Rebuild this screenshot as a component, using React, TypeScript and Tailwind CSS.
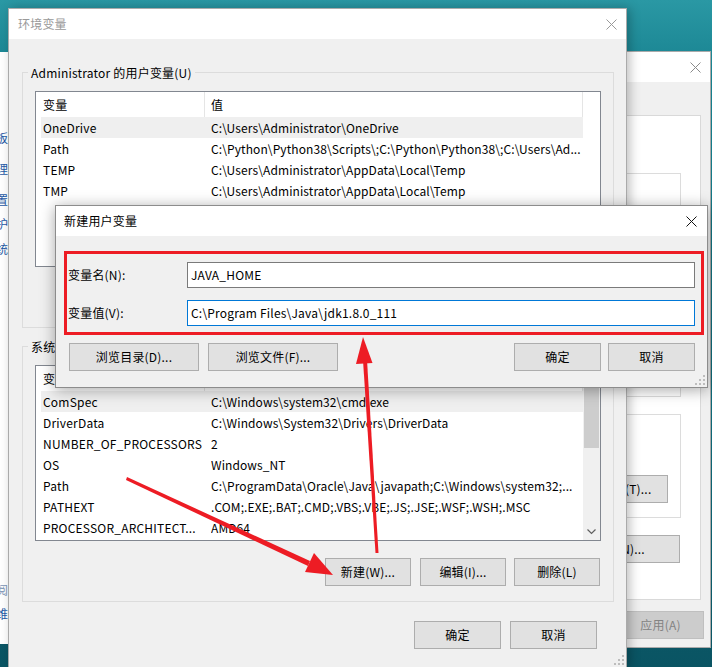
import type { ReactNode } from "react";

const userVars = [
  ["OneDrive", "C:\\Users\\Administrator\\OneDrive"],
  ["Path", "C:\\Python\\Python38\\Scripts\\;C:\\Python\\Python38\\;C:\\Users\\Ad..."],
  ["TEMP", "C:\\Users\\Administrator\\AppData\\Local\\Temp"],
  ["TMP", "C:\\Users\\Administrator\\AppData\\Local\\Temp"],
];

const sysVars = [
  ["ComSpec", "C:\\Windows\\system32\\cmd.exe"],
  ["DriverData", "C:\\Windows\\System32\\Drivers\\DriverData"],
  ["NUMBER_OF_PROCESSORS", "2"],
  ["OS", "Windows_NT"],
  ["Path", "C:\\ProgramData\\Oracle\\Java\\javapath;C:\\Windows\\system32;..."],
  ["PATHEXT", ".COM;.EXE;.BAT;.CMD;.VBS;.VBE;.JS;.JSE;.WSF;.WSH;.MSC"],
  ["PROCESSOR_ARCHITECT...", "AMD64"],
];

const CloseX = ({ color }: { color: string }) => (
  <svg width="11" height="11" viewBox="0 0 11 11">
    <path d="M0.5 0.5 L10.5 10.5 M10.5 0.5 L0.5 10.5" stroke={color} strokeWidth="1" />
  </svg>
);

const Grip = () => (
  <svg width="10" height="10" viewBox="0 0 10 10" className="absolute right-[2px] bottom-[2px]">
    {[[8, 0], [8, 4], [4, 4], [8, 8], [4, 8], [0, 8]].map(([x, y]) => (
      <rect key={`${x}-${y}`} x={x} y={y} width="2" height="2" fill="#bdbdbd" />
    ))}
  </svg>
);

const Btn = ({ children, className = "w-[87px]" }: { children: ReactNode; className?: string }) => (
  <div className={`${className} h-[28px] shrink-0 flex items-center justify-center border border-[#adadad] bg-[#e1e1e1] text-[12px] text-black`}>
    {children}
  </div>
);

const VarList = ({ rows, scroll }: { rows: string[][]; scroll?: boolean }) => (
  <div className="w-[566px] h-[176px] border border-[#828790] bg-white flex">
    <div className="w-[547px] flex flex-col">
      <div className="h-[25px] flex text-[12px]">
        <div className="w-[169px] border-r border-[#e5e5e5] pl-[7px] flex items-center">变量</div>
        <div className="flex-1 border-r border-[#e5e5e5] pl-[6px] flex items-center">值</div>
      </div>
      {rows.map(([name, value], i) => (
        <div key={name + i} className={`ml-[5px] h-[21px] flex items-center text-[12px] text-black ${i === 0 ? "bg-[#efefef]" : ""}`}>
          <div className="w-[170px] pl-[2px] whitespace-nowrap overflow-hidden">{name}</div>
          <div className="flex-1 whitespace-nowrap overflow-hidden tracking-[0.1px]">{value}</div>
        </div>
      ))}
    </div>
    <div className={`w-[17px] flex flex-col ${scroll ? "bg-[#f0f0f0]" : "bg-white"}`}>
      {scroll && (
        <>
          <div className="h-[17px]" />
          <div className="h-[65px] mx-[1px] bg-[#cdcdcd]" />
          <div className="flex-1" />
          <div className="h-[17px] flex items-center justify-center">
            <svg width="9" height="6" viewBox="0 0 9 6">
              <path d="M0.5 0.5 L4.5 4.5 L8.5 0.5" stroke="#606060" strokeWidth="1.2" fill="none" />
            </svg>
          </div>
        </>
      )}
    </div>
  </div>
);

const Group = ({ title, rows, scroll }: { title: string; rows: string[][]; scroll?: boolean }) => (
  <fieldset className="w-[592px] border border-[#dcdcdc] px-[12px] pt-[10px] pb-[15px]">
    <legend className="-ml-[7px] px-[3px] text-[12px] leading-[17px] text-black">{title}</legend>
    <VarList rows={rows} scroll={scroll} />
    <div className="mt-[17px] pr-[1px] flex justify-end">
      <Btn className="w-[86px]">新建(W)...</Btn>
      <div className="ml-[9px]">
        <Btn className="w-[86px]">编辑(I)...</Btn>
      </div>
      <div className="ml-[8px]">
        <Btn className="w-[86px]">删除(L)</Btn>
      </div>
    </div>
  </fieldset>
);

export default function App() {
  return (
    <div className="relative w-[712px] h-[667px] overflow-hidden tracking-[0.2px] font-['Noto_Sans_CJK_SC','Noto_Sans',sans-serif] bg-[linear-gradient(180deg,#2a98a4_0%,#16808e_12%,#0e6a79_60%,#0a5463_100%)]">
      {/* control panel window peeking out on the left */}
      <div className="absolute left-0 top-[52px] w-[10px] h-[592px] bg-white overflow-hidden flex flex-col text-[12px] leading-[16px] text-[#1f5aa6]">
        <span className="-ml-[4px] mt-[78px]">板</span>
        <span className="-ml-[4px] mt-[15px]">理</span>
        <span className="-ml-[4px] mt-[15px]">置</span>
        <span className="-ml-[4px] mt-[8px]">护</span>
        <span className="-ml-[4px] mt-[9px]">统</span>
        <span className="-ml-[4px] mt-[325px] text-[#8096b8]">阅</span>
        <span className="-ml-[4px] mt-[8px]">维</span>
      </div>

      {/* system properties window behind */}
      <div className="absolute left-[520px] top-[51px] w-[191px] h-[597px] border border-[#aaaaaa] bg-[#f0f0f0] flex flex-col">
        <div className="h-[30px] bg-white flex items-center justify-end pr-[9px]">
          <CloseX color="#8a8a8a" />
        </div>
        <div className="flex flex-col items-end pr-[9px] pt-[33px]">
          <div className="w-[170px] h-[485px] bg-white border border-[#d9d9d9] flex flex-col items-end pr-[19px] pt-[57px]">
            <div className="w-[150px] h-[224px] border border-[#dcdcdc]" />
            <div className="w-[150px] h-[104px] mt-[17px] border border-[#dcdcdc] flex flex-col items-end pr-[12px] pt-[60px]">
              <Btn className="w-[84px]">设置(T)...</Btn>
            </div>
            <div className="mt-[17px] mr-[1px]">
              <Btn className="w-[147px]">环境变量(N)...</Btn>
            </div>
          </div>
          <div className="mt-[11px] mr-[-3px] w-[87px] h-[28px] flex items-center justify-center border border-[#bfbfbf] bg-[#cccccc] text-[12px] text-[#838383]">
            应用(A)
          </div>
        </div>
      </div>

      {/* environment variables dialog */}
      <div className="absolute left-[8px] top-[8px] w-[619px] h-[660px] border border-[#aaaaaa] bg-[#f0f0f0] shadow-[3px_0_10px_rgba(0,0,0,0.25)] flex flex-col">
        <div className="h-[30px] shrink-0 bg-white flex items-center justify-between pl-[9px] pr-[9px]">
          <span className="text-[12px] text-[#999999]">环境变量</span>
          <CloseX color="#999999" />
        </div>
        <div className="flex flex-col pl-[13px] pt-[25px]">
          <Group title="Administrator 的用户变量(U)" rows={userVars} />
          <div className="mt-[10px]">
            <Group title="系统变量(S)" rows={sysVars} scroll />
          </div>
          <div className="w-[592px] mt-[19px] pr-[17px] flex justify-end gap-[9px]">
            <Btn>确定</Btn>
            <Btn>取消</Btn>
          </div>
        </div>
        <Grip />
      </div>

      {/* new user variable dialog */}
      <div className="absolute left-[55px] top-[205px] w-[653px] h-[183px] border border-[#8c8c8c] bg-[#f0f0f0] shadow-[0_2px_14px_rgba(0,0,0,0.35)] flex flex-col">
        <div className="h-[30px] shrink-0 bg-white flex items-center justify-between pl-[8px] pr-[10px]">
          <span className="text-[12px] text-black">新建用户变量</span>
          <CloseX color="#111111" />
        </div>
        <div className="flex flex-col px-[12px] pt-[26px] text-[12px] text-black">
          <div className="h-[26px] flex items-center">
            <span className="w-[119px]">变量名(N):</span>
            <div className="w-[508px] h-[26px] border border-[#7a7a7a] bg-white flex items-center pl-[3px]">JAVA_HOME</div>
          </div>
          <div className="mt-[12px] h-[26px] flex items-center">
            <span className="w-[119px]">变量值(V):</span>
            <div className="w-[508px] h-[26px] border border-[#0078d7] bg-white flex items-center pl-[3px]">
              C:\Program Files\Java\jdk1.8.0_111
            </div>
          </div>
          <div className="mt-[17px] pl-[1px] flex items-center">
            <Btn className="w-[130px]">浏览目录(D)...</Btn>
            <div className="ml-[9px]">
              <Btn className="w-[130px]">浏览文件(F)...</Btn>
            </div>
            <div className="flex-1" />
            <Btn>确定</Btn>
            <div className="ml-[7px]">
              <Btn>取消</Btn>
            </div>
          </div>
        </div>
        {/* red highlight around the two fields */}
        <div className="absolute left-[8px] top-[45px] w-[640px] h-[84px] border-[3px] border-[#ed1c24] pointer-events-none" />
        <Grip />
      </div>

      {/* red arrows */}
      <svg className="absolute inset-0 pointer-events-none" width="712" height="667" viewBox="0 0 712 667">
        <path d="M127 477 L310 561 L308 566 L126 480 Z" fill="#ed1c24" />
        <polygon points="333,575 305,572 314,553" fill="#ed1c24" />
        <path d="M375.5 553 L363 360 L367 360 L378.5 553 Z" fill="#ed1c24" />
        <polygon points="363,337 372.5,363 356,364" fill="#ed1c24" />
      </svg>
    </div>
  );
}
